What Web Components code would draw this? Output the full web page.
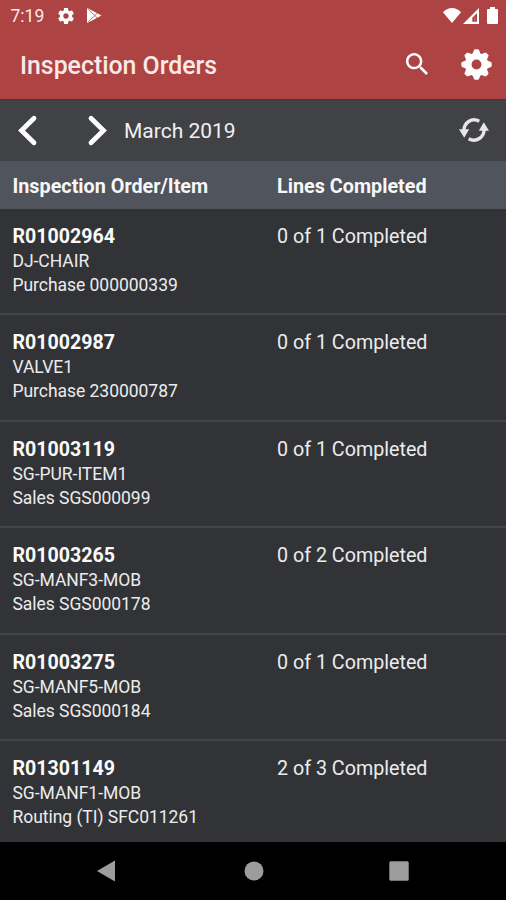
<!DOCTYPE html>
<html lang="en">
<head>
<meta charset="utf-8">
<title>Inspection Orders</title>
<style>
  html, body { margin: 0; height: 100%; background: #000; }
  body { font-family: Roboto, "Liberation Sans", sans-serif; overflow: hidden; }
</style>
</head>
<body>
<inspection-app></inspection-app>
<script>
const ICONS = {
  cog: ['2 2 20 20', '<path fill="currentColor" d="M19.43 12.98c.04-.32.07-.64.07-.98s-.03-.66-.07-.98l2.11-1.65c.19-.15.24-.42.12-.64l-2-3.46c-.12-.22-.39-.3-.61-.22l-2.49 1c-.52-.4-1.08-.73-1.69-.98l-.38-2.65C14.46 2.18 14.25 2 14 2h-4c-.25 0-.46.18-.49.42l-.38 2.65c-.61.25-1.17.59-1.69.98l-2.49-1c-.23-.09-.49 0-.61.22l-2 3.46c-.13.22-.07.49.12.64l2.11 1.65c-.04.32-.07.65-.07.98s.03.66.07.98l-2.11 1.65c-.19.15-.24.42-.12.64l2 3.46c.12.22.39.3.61.22l2.49-1c.52.4 1.08.73 1.69.98l.38 2.65c.03.24.24.42.49.42h4c.25 0 .46-.18.49-.42l.38-2.65c.61-.25 1.17-.59 1.69-.98l2.49 1c.23.09.49 0 .61-.22l2-3.46c.12-.22.07-.49-.12-.64l-2.11-1.65zM12 15.5c-1.93 0-3.5-1.57-3.5-3.5s1.57-3.5 3.5-3.5 3.5 1.57 3.5 3.5-1.57 3.5-3.5 3.5z"/>'],
  play: ['0 0 15 16', '<path fill="currentColor" d="M.8.3 15 8 .8 15.7Q0 15.7 0 15V1Q0 .3.8.3Z"/><path d="M1.3 1.2 11 11M1.3 14.8 11 5" fill="none" stroke="#ad4342" stroke-width=".8"/>'],
  wifi: ['0 0 18 15', '<path fill="currentColor" d="M9 15 0 4.2C2.3 1.7 5.5 0 9 0s6.700 1.700 9 4.200Z"/>'],
  signal: ['0 0 16 16', '<path fill="currentColor" fill-rule="evenodd" d="M16 0V16H0ZM14 5 9.300 9.800V13.800H14Z"/><path fill="currentColor" d="M11.300 9h1v4h-1z" opacity=".25"/>'],
  battery: ['0 0 11 18', '<path fill="currentColor" d="M3 0H8V2H10Q11 2 11 3V17Q11 18 10 18H1Q0 18 0 17V3Q0 2 1 2H3Z"/>'],
  search: ['3 3 17.500 17.500', '<path fill="currentColor" d="M15.500 14h-.79l-.28-.27C15.410 12.590 16 11.110 16 9.500 16 5.910 13.090 3 9.500 3S3 5.910 3 9.500 5.910 16 9.500 16c1.610 0 3.090-.59 4.230-1.570l.27.28v.79l5 4.990L20.490 19l-4.990-5zm-6 0C7.010 14 5 11.990 5 9.500S7.010 5 9.500 5 14 7.010 14 9.500 11.990 14 9.500 14z"/>'],
  gear: ['-16 -16 32 32', '<g fill="currentColor">' +
    [0,45,90,135,180,225,270,315].map(a => `<path transform="rotate(${a})" d="M-4.600 -10 -2.300 -15.400Q0 -16.200 2.300 -15.400L4.600 -10Z"/>`).join('') +
    '</g><circle r="8.500" fill="none" stroke="currentColor" stroke-width="6.800"/>'],
  prev: ['0 0 19 31', '<path d="M16 3.200 3.500 15.500 16 27.800" fill="none" stroke="currentColor" stroke-width="4.800" stroke-linecap="round"/>'],
  next: ['0 0 19 31', '<path d="M3 3.200 15.500 15.500 3 27.800" fill="none" stroke="currentColor" stroke-width="4.800" stroke-linecap="round"/>'],
  sync: ['0 0 30 24', '<g fill="none" stroke="currentColor" stroke-width="3.400"><path d="M4.900 12.500C4.900 5 12.500 -1 20.300 3.200"/><path d="M25.100 11.500C25.100 19 17.500 25 9.700 20.800"/></g><path fill="currentColor" d="M0 11.200H10.200L5.200 19.800ZM30 12.800H19.800L24.800 4.200Z"/>'],
  back: ['0 0 18 22', '<path fill="currentColor" d="M18 .5V21.500L0 11Z"/>'],
  home: ['0 0 20 20', '<circle cx="10" cy="10" r="9.500" fill="currentColor"/>'],
  recent: ['0 0 20 20', '<rect x=".3" y=".3" width="19.400" height="19.400" rx="1.500" fill="currentColor"/>']
};

class AppElement extends HTMLElement {
  connectedCallback() {
    if (!this.shadowRoot) this.attachShadow({ mode: 'open' }).innerHTML = this.render();
  }
}

customElements.define('ui-icon', class extends AppElement {
  render() {
    const [box, body] = ICONS[this.getAttribute('name')];
    const w = this.getAttribute('w'), h = this.getAttribute('h');
    return `<style>:host{display:block;flex:none;width:${w}px;height:${h}px}svg{display:block;overflow:visible}</style>
      <svg width="${w}" height="${h}" viewBox="${box}" preserveAspectRatio="none">${body}</svg>`;
  }
});

customElements.define('status-bar', class extends AppElement {
  render() {
    return `<style>
      :host{display:flex;align-items:center;height:31px;box-sizing:border-box;padding:0 8.500px 0 10.500px;color:#fff;font-size:17.500px}
      .time{width:47.500px;line-height:31px;color:#fae9e8;padding-top:1px}
      .mid{display:flex;gap:12.500px;flex:1;align-items:center}
      .right{display:flex;align-items:center}
      .right ui-icon:nth-child(2){margin:0 8px 0 1.500px}
    </style>
    <span class="time">7:19</span>
    <div class="mid"><ui-icon name="cog" w="16" h="16"></ui-icon><ui-icon name="play" w="14.500" h="15"></ui-icon></div>
    <div class="right"><ui-icon name="wifi" w="18" h="15"></ui-icon><ui-icon name="signal" w="16" h="16"></ui-icon><ui-icon name="battery" w="11" h="17"></ui-icon></div>`;
  }
});

customElements.define('app-bar', class extends AppElement {
  render() {
    return `<style>
      :host{display:flex;align-items:center;height:67.500px;box-sizing:border-box;padding:0 14px 0 20px;color:#fff}
      .title{flex:1;font-size:24.850px;font-weight:500;line-height:67px;color:#fbe9e7;padding-top:2px}
      ui-icon{margin-bottom:1px}
      ui-icon + ui-icon{margin-left:33px}
    </style>
    <span class="title"><slot></slot></span>
    <ui-icon name="search" w="22" h="22"></ui-icon><ui-icon name="gear" w="31" h="31"></ui-icon>`;
  }
});

customElements.define('month-bar', class extends AppElement {
  render() {
    return `<style>
      :host{display:flex;align-items:center;height:62px;box-sizing:border-box;border-top:2px solid #3b4045;background:#414246;padding:0 17.500px 0 17.500px;color:#fff}
      .month{flex:1;margin-left:17.500px;font-size:21px;color:#f0f0f1;padding-top:1px}
      .next{margin-left:51px}
      ui-icon{margin-bottom:1px}
      .sync{color:#e6e6ea}
    </style>
    <ui-icon name="prev" w="19" h="31"></ui-icon>
    <ui-icon class="next" name="next" w="19" h="31"></ui-icon>
    <span class="month"><slot></slot></span>
    <ui-icon class="sync" name="sync" w="30" h="24"></ui-icon>`;
  }
});

customElements.define('list-heading', class extends AppElement {
  render() {
    return `<style>
      :host{display:grid;grid-template-columns:264.500px 1fr;align-items:center;height:48.500px;box-sizing:border-box;padding:3.500px 0 0 12.500px;background:#50545d;color:#f7f7f8;font-size:19.800px;font-weight:700}
    </style>
    <slot name="item"></slot><slot name="lines"></slot>`;
  }
});

customElements.define('order-row', class extends AppElement {
  render() {
    return `<style>
      :host{display:grid;grid-template-columns:264.500px 1fr;height:106.400px;box-sizing:border-box;padding:15px 0 0 12.500px;border-bottom:2px solid #434448;color:#ececed}
      .id{font-size:19.600px;font-weight:700;line-height:25px;color:#fafafa}
      .small{font-size:17.500px;letter-spacing:-.04px;line-height:24px}
      .count{font-size:19.700px;line-height:25px}
    </style>
    <div><div class="id"><slot name="id"></slot></div>
      <div class="small"><slot name="code"></slot></div>
      <div class="small"><slot name="source"></slot></div></div>
    <div class="count"><slot name="count"></slot></div>`;
  }
});

customElements.define('nav-bar', class extends AppElement {
  render() {
    return `<style>
      :host{display:flex;align-items:center;height:58.500px;box-sizing:border-box;padding-left:97px;background:#000;color:#9c9c9c}
      ui-icon:nth-of-type(2){margin-left:128.500px}
      ui-icon:nth-of-type(3){margin-left:125.500px}
    </style>
    <ui-icon name="back" w="18" h="22"></ui-icon><ui-icon name="home" w="20" h="20"></ui-icon><ui-icon name="recent" w="20" h="20"></ui-icon>`;
  }
});

const ORDERS = [
  ['R01002964', 'DJ-CHAIR', 'Purchase 000000339', '0 of 1 Completed'],
  ['R01002987', 'VALVE1', 'Purchase 230000787', '0 of 1 Completed'],
  ['R01003119', 'SG-PUR-ITEM1', 'Sales SGS000099', '0 of 1 Completed'],
  ['R01003265', 'SG-MANF3-MOB', 'Sales SGS000178', '0 of 2 Completed'],
  ['R01003275', 'SG-MANF5-MOB', 'Sales SGS000184', '0 of 1 Completed'],
  ['R01301149', 'SG-MANF1-MOB', 'Routing (TI) SFC011261', '2 of 3 Completed']
];

customElements.define('inspection-app', class extends AppElement {
  render() {
    const rows = ORDERS.map(([id, code, source, count]) => `<order-row>
      <span slot="id">${id}</span><span slot="code">${code}</span>
      <span slot="source">${source}</span><span slot="count">${count}</span></order-row>`).join('');
    return `<style>
      :host{display:flex;flex-direction:column;width:506px;height:900px;background:#323336;overflow:hidden}
      header{background:#ad4342;flex:none}
      month-bar,list-heading,nav-bar{flex:none}
      main{flex:1;min-height:0;overflow:hidden}
    </style>
    <header><status-bar></status-bar><app-bar>Inspection Orders</app-bar></header>
    <month-bar>March 2019</month-bar>
    <list-heading><span slot="item">Inspection Order/Item</span><span slot="lines">Lines Completed</span></list-heading>
    <main>${rows}</main>
    <nav-bar></nav-bar>`;
  }
});
</script>
</body>
</html>
